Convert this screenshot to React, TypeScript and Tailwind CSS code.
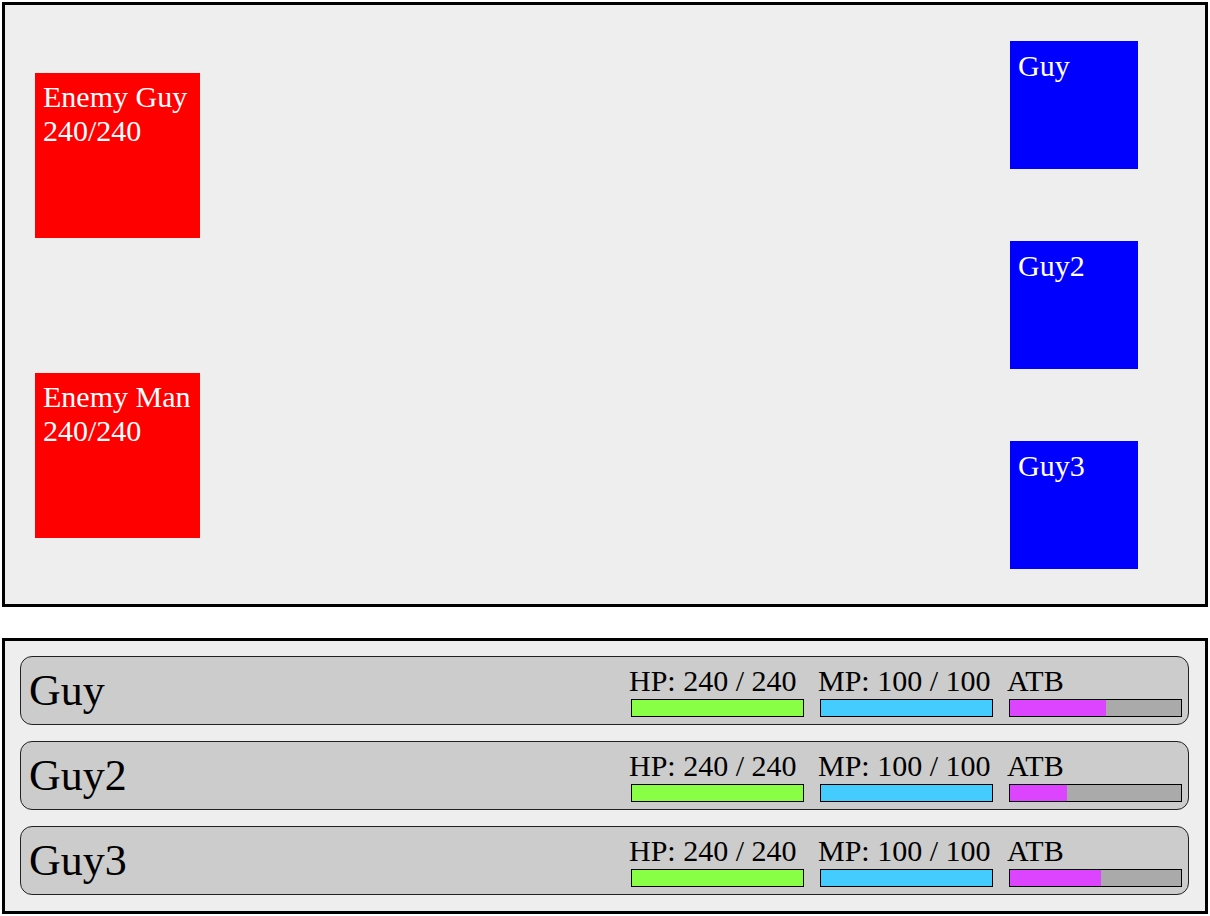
import React from 'react'

const enemies = [
    { name: 'Enemy Guy', hp: 240, maxHp: 240 },
    { name: 'Enemy Man', hp: 240, maxHp: 240 },
]

const party = [
    { name: 'Guy', hp: 240, maxHp: 240, mp: 100, maxMp: 100, atb: 56 },
    { name: 'Guy2', hp: 240, maxHp: 240, mp: 100, maxMp: 100, atb: 33.5 },
    { name: 'Guy3', hp: 240, maxHp: 240, mp: 100, maxMp: 100, atb: 53 },
]

const Bar = ({ label, pct, fill }: { label: string; pct: number; fill: string }) => {
    return (
        <div className="w-[176px] shrink-0">
            <div className="text-[30px] leading-[normal] whitespace-nowrap">{label}</div>
            <div className="mt-[1px] ml-[2px] w-[173px] h-[18px] border border-black bg-[#aaaaaa]">
                <div className={`h-full ${fill}`} style={{ width: `${pct}%` }} />
            </div>
        </div>
    )
}

const App = () => {
    return (
        <div className="p-[2px] bg-white text-black leading-[normal]" style={{ fontFamily: '"Liberation Serif", "Times New Roman", serif' }}>
            {/* battlefield */}
            <div className="h-[605px] border-[3px] border-black bg-[#eeeeee] flex justify-between">
                <div className="flex flex-col gap-[135px] pl-[30px] pt-[68px]">
                    {enemies.map((e) => (
                        <div key={e.name} className="w-[165px] h-[165px] bg-[#ff0000] text-white text-[30px] px-2 pt-[7px] leading-[normal]">
                            <div>{e.name}</div>
                            <div>{e.hp}/{e.maxHp}</div>
                        </div>
                    ))}
                </div>
                <div className="flex flex-col gap-[72px] pr-[67px] pt-[36px]">
                    {party.map((p) => (
                        <div key={p.name} className="w-[128px] h-[128px] bg-[#0000ff] text-white text-[30px] px-2 pt-2 leading-[normal]">
                            {p.name}
                        </div>
                    ))}
                </div>
            </div>

            {/* menu */}
            <div className="mt-[31px] h-[276px] border-[3px] border-black bg-[#eeeeee] flex flex-col gap-4 pt-[15px] pl-[15px] pr-4">
                {party.map((p) => (
                    <div key={p.name} className="h-[69px] border border-[#222222] rounded-xl bg-[#cccccc] flex items-center justify-between pl-2 pr-[5px]">
                        <div className="text-[44px] leading-[normal]">{p.name}</div>
                        <div className="flex gap-[13px]">
                            <Bar label={`HP: ${p.hp} / ${p.maxHp}`} pct={(p.hp / p.maxHp) * 100} fill="bg-[#88ff44]" />
                            <Bar label={`MP: ${p.mp} / ${p.maxMp}`} pct={(p.mp / p.maxMp) * 100} fill="bg-[#44ccff]" />
                            <Bar label="ATB" pct={p.atb} fill="bg-[#dd44ff]" />
                        </div>
                    </div>
                ))}
            </div>
        </div>
    )
}

export default App
